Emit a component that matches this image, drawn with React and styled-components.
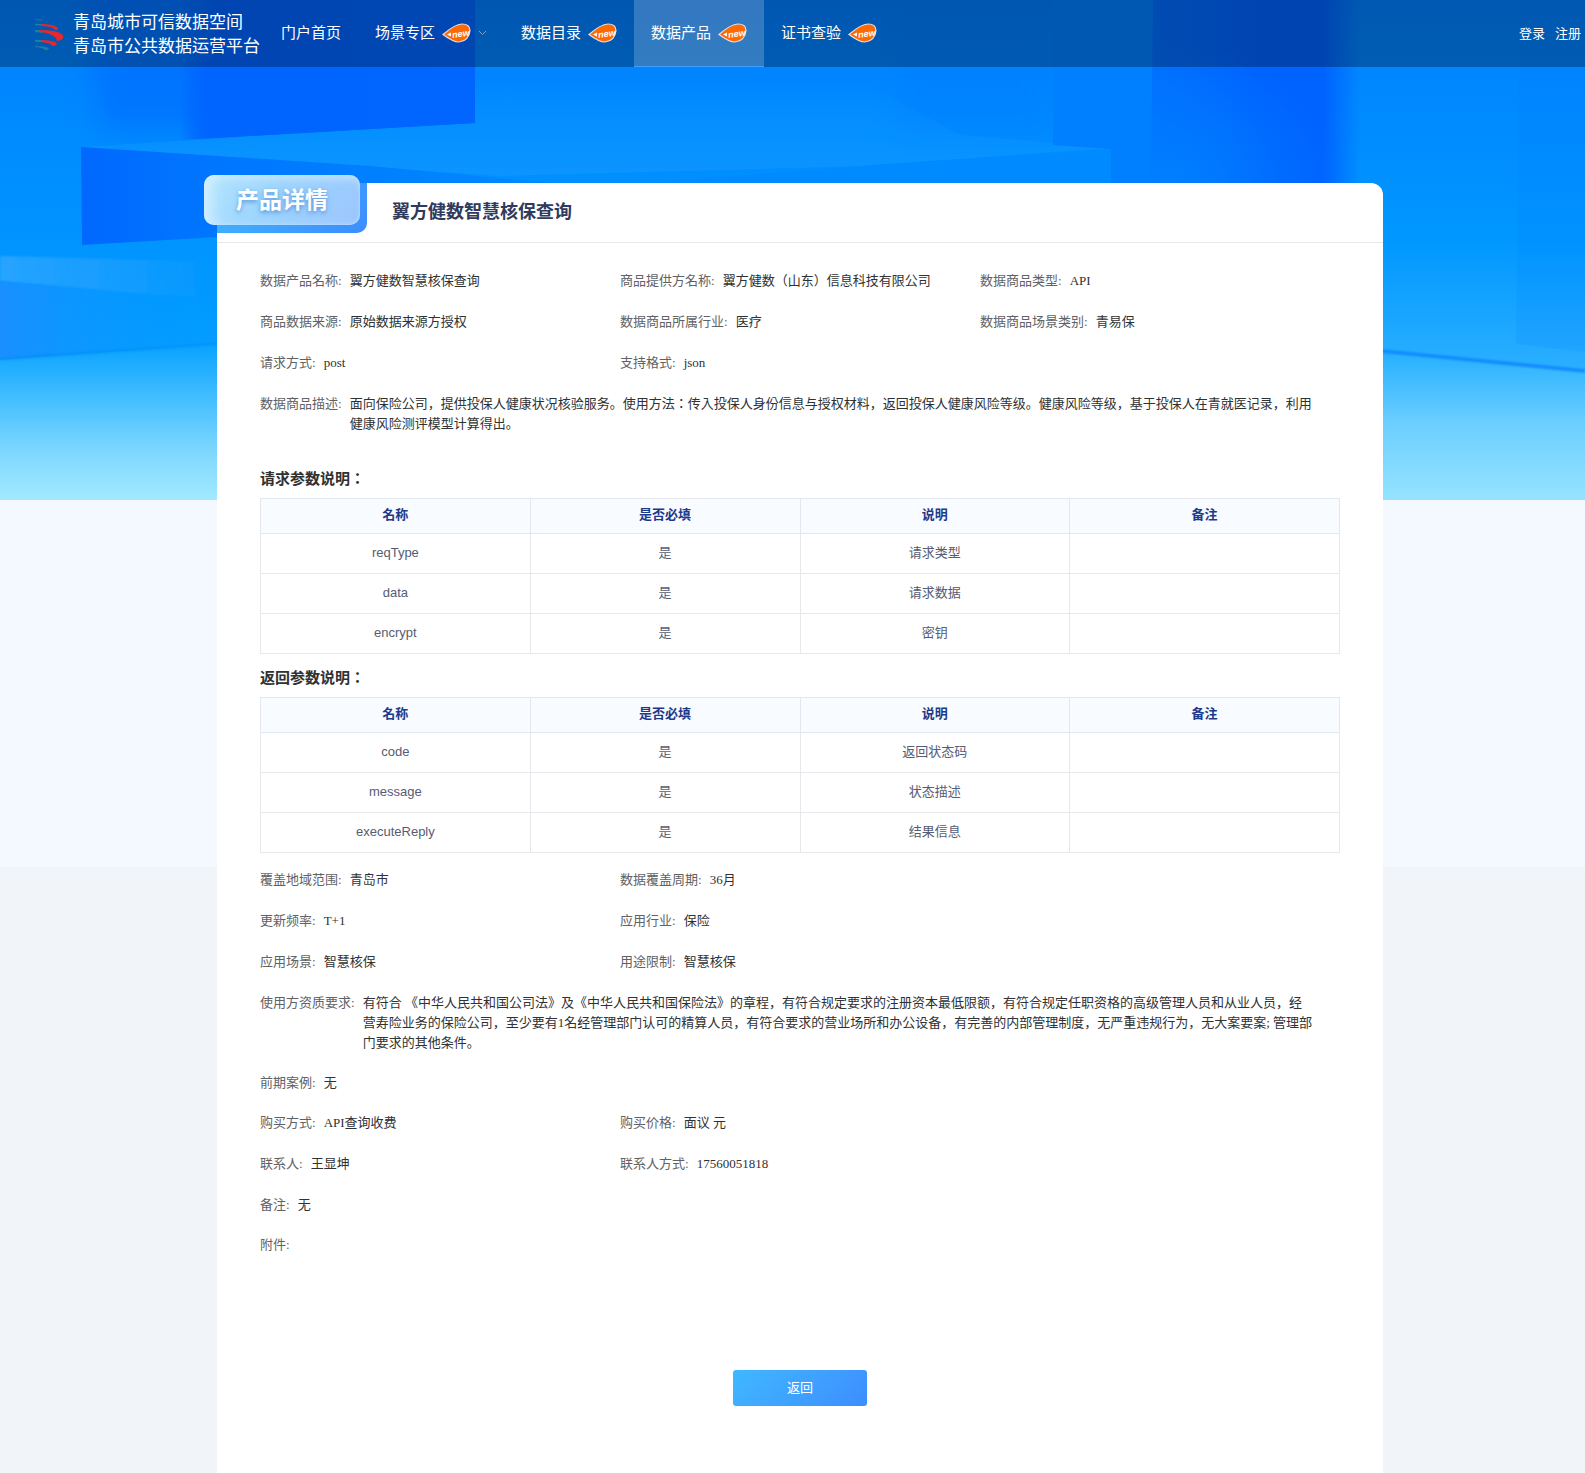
import React from 'react';
import styled, { createGlobalStyle } from 'styled-components';

const GlobalStyle = createGlobalStyle`
  * {
    box-sizing: border-box;
  }

  body {
    margin: 0;
    background: #f1f5fa;
    font-family: "Liberation Sans", "Noto Sans CJK JP", sans-serif;
  }
`;

const Page = styled.div`
  position: relative;
  min-height: 100vh;
  background: linear-gradient(#f4f8ff, #f4f8ff) 0 0 / 100% 867px no-repeat;
`;

const Backdrop = styled.svg`
  position: absolute;
  top: 0;
  left: 0;
  width: 100%;
  height: 500px;
`;

const TopBar = styled.header`
  position: relative;
  display: flex;
  height: 67px;
  background: rgba(0, 0, 0, 0.3);
  color: white;
`;

const Brand = styled.a`
  display: flex;
  align-items: center;
  gap: 8px;
  width: 264px;
  padding-top: 2px;
  padding-left: 35px;
  color: white;
  font-size: 17px;
  line-height: 24px;
  white-space: nowrap;
  text-decoration: none;

  svg {
    flex-shrink: 0;
  }
`;

const Nav = styled.nav`
  display: flex;
  flex: 1;
`;

const NavItem = styled.a`
  display: flex;
  align-items: center;
  gap: 7px;
  padding: 0 17px;
  font-size: 15px;
  color: white;
  white-space: nowrap;
  text-decoration: none;
  background: ${props => props.$active ? 'rgba(255, 255, 255, 0.2)' : 'none'};
  border-bottom: 1px solid ${props => props.$active ? '#409eff' : 'transparent'};

  span {
    padding-bottom: 3px;
  }
`;

const Account = styled.div`
  display: flex;
  align-items: center;
  gap: 10px;
  padding: 0 4px 3px 0;

  a {
    color: white;
    font-size: 13px;
    text-decoration: none;
  }
`;

const Card = styled.main`
  position: relative;
  margin: 116px 202px 0 217px;
  padding-bottom: 67px;
  background: white;
  border-radius: 0 12px 0 0;
`;

const CardHeader = styled.div`
  display: flex;
  height: 60px;
  border-bottom: 1px solid #e6e8eb;

  h1 {
    margin: 0 0 0 25px;
    font-size: 18px;
    line-height: 58px;
    color: #303a5c;
  }
`;

const TagBase = styled.div`
  position: relative;
  width: 150px;
  height: 50px;
  background: linear-gradient(135deg, #40b8ff, #3d8dff);
  border-radius: 0 0 10px 0;
`;

const Tag = styled.div`
  position: absolute;
  top: -8px;
  left: -13px;
  width: 156px;
  height: 50px;
  border-radius: 10px;
  background: linear-gradient(125deg, #b4e5ff 0%, #9dd4fd 45%, #9cc5ff 100%);
  box-shadow: inset 14px 0 14px -6px rgba(225, 245, 255, 0.7), inset 0 8px 10px -4px rgba(205, 238, 255, 0.6),
    inset -1px -1px 2px rgba(190, 225, 255, 0.5);
  color: white;
  font-size: 23px;
  font-weight: bold;
  line-height: 50px;
  text-align: center;
  text-shadow: 0 2px 4px rgba(40, 110, 200, 0.6);
`;

const CardBody = styled.div`
  padding: 28px 43px 0;
`;

const Fields = styled.dl`
  display: grid;
  grid-template-columns: repeat(3, 1fr);
  margin: 0;
`;

const FieldItem = styled.div`
  display: flex;
  gap: 8px;
  grid-column: ${props => props.$wide ? '1 / -1' : props.$first ? '1' : 'auto'};
  margin-bottom: ${props => props.$wide ? '20px' : '21px'};
  font-family: "Liberation Serif", "Noto Sans CJK JP", serif;
  font-size: 13px;
  line-height: 20px;

  dt {
    flex-shrink: 0;
    color: #606266;
  }

  dd {
    margin: 0;
    padding-right: ${props => props.$wide ? '26px' : '0'};
    color: #303133;
  }
`;

const SectionTitle = styled.h2`
  margin: 14px 0 9px;
  font-size: 15px;
  line-height: 20px;
  color: #303133;
`;

const ParamTable = styled.table`
  width: 100%;
  table-layout: fixed;
  border-collapse: collapse;
  border: 1px solid #dcdfe6;
  font-size: 13px;
  line-height: 20px;
  text-align: center;

  th {
    height: 35px;
    padding: 0 0 2px;
    border: 1px solid #e4e7ed;
    background: #f8fbff;
    color: #1d3a8a;
  }

  td {
    height: 40px;
    padding: 0 0 1px;
    border: 1px solid #e6e8eb;
    color: #565c73;
  }
`;

const Params = styled.section`
  padding: ${props => props.$last ? '0 0 17px' : '1px 0 0'};
`;

const BackButton = styled.button`
  display: block;
  width: 134px;
  height: 36px;
  margin: 95px auto 0;
  padding: 0 0 3px;
  border: none;
  border-radius: 3px;
  background: linear-gradient(135deg, #40b8ff, #3d8dff);
  color: white;
  font-family: inherit;
  font-size: 13px;
  cursor: pointer;
`;

const navItems = [
  { label: '门户首页' },
  { label: '场景专区', isNew: true, hasMenu: true },
  { label: '数据目录', isNew: true },
  { label: '数据产品', isNew: true, active: true },
  { label: '证书查验', isNew: true },
];

const baseFields = [
  { label: '数据产品名称', value: '翼方健数智慧核保查询', first: true },
  { label: '商品提供方名称', value: '翼方健数（山东）信息科技有限公司' },
  { label: '数据商品类型', value: 'API' },
  { label: '商品数据来源', value: '原始数据来源方授权', first: true },
  { label: '数据商品所属行业', value: '医疗' },
  { label: '数据商品场景类别', value: '青易保' },
  { label: '请求方式', value: 'post', first: true },
  { label: '支持格式', value: 'json' },
  {
    label: '数据商品描述',
    value: '面向保险公司，提供投保人健康状况核验服务。使用方法：传入投保人身份信息与授权材料，返回投保人健康风险等级。健康风险等级，基于投保人在青就医记录，利用健康风险测评模型计算得出。',
    wide: true
  },
];

const extraFields = [
  { label: '覆盖地域范围', value: '青岛市', first: true },
  { label: '数据覆盖周期', value: '36月' },
  { label: '更新频率', value: 'T+1', first: true },
  { label: '应用行业', value: '保险' },
  { label: '应用场景', value: '智慧核保', first: true },
  { label: '用途限制', value: '智慧核保' },
  {
    label: '使用方资质要求',
    value: '有符合 《中华人民共和国公司法》及《中华人民共和国保险法》的章程，有符合规定要求的注册资本最低限额，有符合规定任职资格的高级管理人员和从业人员，经营寿险业务的保险公司，至少要有1名经管理部门认可的精算人员，有符合要求的营业场所和办公设备，有完善的内部管理制度，无严重违规行为，无大案要案; 管理部门要求的其他条件。',
    wide: true
  },
  { label: '前期案例', value: '无', wide: true },
  { label: '购买方式', value: 'API查询收费', first: true },
  { label: '购买价格', value: '面议 元' },
  { label: '联系人', value: '王显坤', first: true },
  { label: '联系人方式', value: '17560051818' },
  { label: '备注', value: '无', wide: true },
  { label: '附件', value: '', wide: true },
];

const requestParams = [
  ['reqType', '是', '请求类型', ''],
  ['data', '是', '请求数据', ''],
  ['encrypt', '是', '密钥', ''],
];

const responseParams = [
  ['code', '是', '返回状态码', ''],
  ['message', '是', '状态描述', ''],
  ['executeReply', '是', '结果信息', ''],
];

const HeroBackdrop = () => (
  <Backdrop viewBox="0 0 1585 500" preserveAspectRatio="none" aria-hidden="true">
    <defs>
      <linearGradient id="sky" x1="0" y1="0" x2="0" y2="1">
        <stop offset="0" stopColor="#007dff" />
        <stop offset="0.3" stopColor="#008dff" />
        <stop offset="0.6" stopColor="#0099ff" />
        <stop offset="1" stopColor="#12a8ff" />
      </linearGradient>
      <linearGradient id="block" x1="0" y1="0" x2="1" y2="0">
        <stop offset="0" stopColor="#0064ff" stopOpacity="0" />
        <stop offset="0.12" stopColor="#0064ff" />
        <stop offset="1" stopColor="#0066ff" />
      </linearGradient>
      <linearGradient id="glow" x1="0" y1="0" x2="0" y2="1">
        <stop offset="0" stopColor="#0a94ff" stopOpacity="0" />
        <stop offset="0.7" stopColor="#0a94ff" stopOpacity="0.9" />
        <stop offset="1" stopColor="#1096ff" />
      </linearGradient>
      <linearGradient id="slab" x1="0" y1="0" x2="1" y2="0">
        <stop offset="0" stopColor="#0068ff" />
        <stop offset="0.2" stopColor="#0074ff" />
        <stop offset="0.5" stopColor="#007eff" />
        <stop offset="1" stopColor="#008cff" />
      </linearGradient>
      <linearGradient id="pillar" x1="0" y1="0" x2="1" y2="0">
        <stop offset="0" stopColor="#006eff" />
        <stop offset="0.5" stopColor="#0062ff" />
        <stop offset="0.82" stopColor="#0062ff" />
        <stop offset="1" stopColor="#0062ff" stopOpacity="0" />
      </linearGradient>
      <radialGradient id="pillarLight" cx="0.1" cy="1" r="0.8">
        <stop offset="0" stopColor="#0080ff" />
        <stop offset="1" stopColor="#0080ff" stopOpacity="0" />
      </radialGradient>
      <linearGradient id="band" x1="0" y1="0" x2="1" y2="0">
        <stop offset="0" stopColor="#26a4ff" />
        <stop offset="0.5" stopColor="#1c9fff" stopOpacity="0.8" />
        <stop offset="1" stopColor="#1c9fff" stopOpacity="0" />
      </linearGradient>
      <linearGradient id="shade" x1="0" y1="0" x2="1" y2="0">
        <stop offset="0" stopColor="#1a90ff" />
        <stop offset="1" stopColor="#009cff" stopOpacity="0" />
      </linearGradient>
      <linearGradient id="rightWall" x1="0" y1="0" x2="0" y2="1">
        <stop offset="0" stopColor="#0080ff" />
        <stop offset="0.35" stopColor="#008cff" />
        <stop offset="0.65" stopColor="#0098ff" />
        <stop offset="1" stopColor="#2cb0ff" />
      </linearGradient>
      <linearGradient id="floor" x1="0" y1="0" x2="0" y2="1">
        <stop offset="0" stopColor="#08a2ff" />
        <stop offset="0.4" stopColor="#4cc2ff" />
        <stop offset="0.7" stopColor="#80d8ff" />
        <stop offset="1" stopColor="#a2e9ff" />
      </linearGradient>
      <linearGradient id="floorRight" x1="0" y1="0" x2="0" y2="1">
        <stop offset="0" stopColor="#20adff" />
        <stop offset="0.5" stopColor="#6ccfff" />
        <stop offset="1" stopColor="#96e3ff" />
      </linearGradient>
      <filter id="soft">
        <feGaussianBlur stdDeviation="1" />
      </filter>
      <filter id="haze" x="-30%" y="-30%" width="160%" height="160%">
        <feGaussianBlur stdDeviation="14" />
      </filter>
    </defs>
    <rect width="1585" height="500" fill="url(#sky)" />
    <path d="M80 -40H230V130H100Z" fill="#006eff" opacity="0.7" filter="url(#haze)" />
    <path d="M180 0H475V123L180 140Z" fill="url(#block)" />
    <path d="M81 147L475 123V80H860L960 135L1111 148L860 166L500 176Z" fill="url(#glow)" opacity="0.8" />
    <path d="M180 60H475V123L180 140Z" fill="url(#block)" />
    <path d="M81 147L370 166L500 178L600 186V225L217 237L82 245Z" fill="url(#slab)" />
    <path d="M900 0H1053V130H900Z" fill="#007cff" opacity="0.3" filter="url(#haze)" />
    <path d="M860 166L1111 149V190H560Z" fill="#008aff" />
    <path d="M1053 0H1153V190H1111V149L1053 145Z" fill="#007fff" />
    <path d="M1300 0H1585V372L1300 344Z" fill="url(#rightWall)" />
    <path d="M1153 0H1360V260H1150Z" fill="url(#pillar)" />
    <path d="M1153 0H1360V190H1150Z" fill="url(#pillarLight)" />
    <path d="M1520 0H1585V352L1516 344Z" fill="#0070ff" opacity="0.12" />
    <path d="M0 256L217 262V298L147 294L0 281Z" fill="url(#band)" filter="url(#soft)" />
    <path d="M0 281L147 294L217 297V345L0 360Z" fill="url(#shade)" />
    <path d="M0 360L217 344H700V500H0Z" fill="url(#floor)" />
    <path d="M0 359L217 344" stroke="#008cf5" strokeWidth="3" opacity="0.5" filter="url(#soft)" />
    <path d="M1340 347L1585 371V500H1340Z" fill="url(#floorRight)" />
    <path d="M1340 347L1585 371" stroke="#0a84ff" strokeWidth="3" filter="url(#soft)" />
  </Backdrop>
);

const Logo = () => (
  <svg width="30" height="34" viewBox="0 0 30 34" aria-hidden="true">
    <g fill="#1f7f9c">
      <path d="M0 1Q6 0 9 3Q5 3 0 2Z" opacity="0.6" />
      <path d="M0 6H8V8L0 7Z" />
      <path d="M0 12H8V15L0 14Z" />
      <path d="M0 22H8V24L0 24Z" />
      <path d="M0 28Q9 28 14 30Q13 33 10 32Q9 30 0 29Z" />
    </g>
    <g fill="#e8262c">
      <path d="M6 6Q19 6 23 10Q24 12 20 12Q17 8 6 8Z" />
      <path d="M5 12Q23 12 28 17Q30 22 22 23Q21 16 5 14Z" />
      <path d="M6 22Q17 22 22 25Q22 28 17 28Q17 25 6 24Z" />
    </g>
  </svg>
);

const NewBadge = () => (
  <svg width="29" height="20" viewBox="0 0 29 20" role="img" aria-label="new">
    <path
      d="M1 11.500Q13 1 20 1Q28 1 28 7.500Q27 18 17 19Q11 19 1 11.500Z"
      fill="#ff6a00"
      stroke="#e3dfe6"
      strokeWidth="1.200"
    />
    <path d="M5 11.500L9 9.500V13.500Z" fill="white" />
    <text
      x="10"
      y="14"
      fill="white"
      fontFamily="Liberation Sans"
      fontSize="9"
      fontWeight="bold"
      fontStyle="italic"
      transform="rotate(-8 17 11)"
    >
      new
    </text>
  </svg>
);

const Chevron = () => (
  <svg width="9" height="6" viewBox="0 0 9 6" aria-hidden="true">
    <path d="M1 1L4.500 4.500L8 1" fill="none" stroke="#7f9fc8" strokeWidth="1" />
  </svg>
);

const FieldList = ({ items }) => (
  <Fields>
    {items.map(item => (
      <FieldItem key={item.label} $wide={item.wide} $first={item.first}>
        <dt>{item.label}:</dt>
        <dd>{item.value}</dd>
      </FieldItem>
    ))}
  </Fields>
);

const ParamSection = ({ title, rows, last }) => (
  <Params $last={last}>
    <SectionTitle>{title}</SectionTitle>
    <ParamTable>
      <thead>
        <tr>
          <th>名称</th>
          <th>是否必填</th>
          <th>说明</th>
          <th>备注</th>
        </tr>
      </thead>
      <tbody>
        {rows.map(row => (
          <tr key={row[0]}>
            {row.map((cell, index) => (
              <td key={index}>{cell}</td>
            ))}
          </tr>
        ))}
      </tbody>
    </ParamTable>
  </Params>
);

const App = () => {
  const handleBack = () => {
    window.history.back();
  };

  return (
    <Page>
      <GlobalStyle />
      <HeroBackdrop />

      <TopBar>
        <Brand href="#home">
          <Logo />
          <span>
            青岛城市可信数据空间
            <br />
            青岛市公共数据运营平台
          </span>
        </Brand>
        <Nav>
          {navItems.map(item => (
            <NavItem key={item.label} href="#nav" $active={item.active}>
              <span>{item.label}</span>
              {item.isNew && <NewBadge />}
              {item.hasMenu && <Chevron />}
            </NavItem>
          ))}
        </Nav>
        <Account>
          <a href="#login">登录</a>
          <a href="#register">注册</a>
        </Account>
      </TopBar>

      <Card>
        <CardHeader>
          <TagBase>
            <Tag>产品详情</Tag>
          </TagBase>
          <h1>翼方健数智慧核保查询</h1>
        </CardHeader>

        <CardBody>
          <FieldList items={baseFields} />
          <ParamSection title="请求参数说明：" rows={requestParams} />
          <ParamSection title="返回参数说明：" rows={responseParams} last />
          <FieldList items={extraFields} />
          <BackButton type="button" onClick={handleBack}>返回</BackButton>
        </CardBody>
      </Card>
    </Page>
  );
};

export default App;
